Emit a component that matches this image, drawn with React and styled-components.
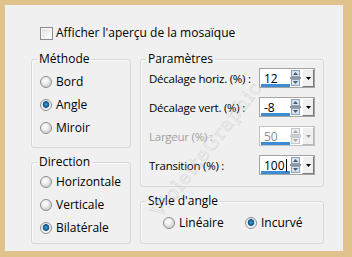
import React from 'react';
import styled, { createGlobalStyle } from 'styled-components';

const GlobalStyle = createGlobalStyle`
  body {
    margin: 0;
    font-family: 'Open Sans', 'Noto Sans', sans-serif;
    font-size: 12px;
    color: #000;
  }
`;

function Radio({ checked, label, disabled }) {
  return (
    <RadioRow $disabled={disabled}>
      <RadioDot $checked={checked} />
      <span>{label}</span>
    </RadioRow>
  );
}

function SpinArrows({ disabled }) {
  const tri = disabled ? '#a8a8a8' : '#4a5a70';
  const box = disabled ? '#eceef0' : '#d6e2ee';
  const edge = disabled ? '#c4c8cc' : '#8fa2b8';
  return (
    <svg width="11" height="18" viewBox="0 0 11 18">
      <rect x="1.5" y="1.5" width="8" height="6" fill={box} stroke={edge} />
      <path d="M3 6 L5.5 3 L8 6 Z" fill={tri} />
      <line x1="0" y1="9" x2="11" y2="9" stroke={disabled ? '#9a9a9a' : '#1e2a38'} strokeWidth="1" />
      <rect x="1.5" y="10.5" width="8" height="6" fill={box} stroke={edge} />
      <path d="M3 12 L8 12 L5.5 15 Z" fill={tri} />
    </svg>
  );
}

function Spin({ value, disabled, caret }) {
  return (
    <SpinBox $disabled={disabled}>
      <SpinField $disabled={disabled}>
        {value}
        {caret && <Caret />}
      </SpinField>
      <SpinArrowsWrap>
        <SpinArrows disabled={disabled} />
      </SpinArrowsWrap>
      <DropButton $disabled={disabled}>
        <svg width="5" height="3" viewBox="0 0 5 3">
          <path d="M0 0 L5 0 L2.5 3 Z" fill={disabled ? '#9a9a9a' : '#000'} />
        </svg>
      </DropButton>
    </SpinBox>
  );
}

function App() {
  return (
    <Frame>
      <GlobalStyle />
      <Panel>
        <CheckRow>
          <CheckBox />
          <span>Afficher l'aperçu de la mosaïque</span>
        </CheckRow>

        <Columns>
          <Column $width={100}>
            <Group $height={97} $top={3}>
              <Legend>Méthode</Legend>
              <Radio label="Bord" />
              <Radio label="Angle" checked />
              <Radio label="Miroir" />
            </Group>
            <Group $height={90} $top={0}>
              <Legend>Direction</Legend>
              <Radio label="Horizontale" />
              <Radio label="Verticale" />
              <Radio label="Bilatérale" checked />
            </Group>
          </Column>

          <Column $width={184}>
            <Group $height={136} $top={1}>
              <Legend>Paramètres</Legend>
              <ParamList>
                <ParamRow>
                  <ParamLabel>Décalage horiz. (%) :</ParamLabel>
                  <Spin value="12" />
                </ParamRow>
                <ParamRow>
                  <ParamLabel>Décalage vert. (%) :</ParamLabel>
                  <Spin value="-8" />
                </ParamRow>
                <ParamRow>
                  <ParamLabel $disabled>Largeur (%) :</ParamLabel>
                  <Spin value="50" disabled />
                </ParamRow>
                <ParamRow>
                  <ParamLabel>Transition (%) :</ParamLabel>
                  <Spin value="100" caret />
                </ParamRow>
              </ParamList>
            </Group>
            <Group $height={51} $top={2}>
              <Legend>Style d'angle</Legend>
              <StyleOptions>
                <Radio label="Linéaire" />
                <Radio label="Incurvé" checked />
              </StyleOptions>
            </Group>
          </Column>
        </Columns>

        <Watermark>VioletteGraphic</Watermark>
      </Panel>
    </Frame>
  );
}

const Frame = styled.div`
  width: 352px;
  height: 257px;
  box-sizing: border-box;
  padding: 5px 9px 6px 5px;
  background: #dfc28c;
`;

const Panel = styled.div`
  position: relative;
  height: 100%;
  box-sizing: border-box;
  padding: 21px 0 0 26px;
  background: #f0f0f0;
  overflow: hidden;
`;

const CheckRow = styled.label`
  display: flex;
  align-items: center;
  gap: 3px;
  height: 14px;
  margin-left: 9px;
  line-height: 14px;
`;

const CheckBox = styled.span`
  width: 11px;
  height: 11px;
  border: 1px solid #8c8c8c;
  background: linear-gradient(135deg, #dcdcdc 0%, #f4f4f4 60%, #ffffff 100%);
  box-shadow: inset 0 0 0 1px #f8f8f8;
`;

const Columns = styled.div`
  display: flex;
  gap: 9px;
  margin-top: 11px;
`;

const Column = styled.div`
  display: flex;
  flex-direction: column;
  gap: 6px;
  width: ${({ $width }) => $width}px;
`;

const Group = styled.fieldset`
  margin: 0;
  min-width: 0;
  height: ${({ $height }) => $height}px;
  box-sizing: border-box;
  padding: ${({ $top }) => $top}px 8px 0 8px;
  border: 1px solid #d8d8d8;
  border-radius: 3px;
  box-shadow: inset 1px 1px 0 #fbfbfb;
`;

const Legend = styled.legend`
  margin-left: -3px;
  padding: 0 2px;
  font-size: 12px;
  line-height: 16px;
`;

const RadioRow = styled.div`
  display: flex;
  align-items: center;
  gap: 4px;
  height: 23px;
  color: ${({ $disabled }) => ($disabled ? '#a0a0a0' : '#000')};
`;

const RadioDot = styled.span`
  flex: none;
  width: 12px;
  height: 12px;
  box-sizing: border-box;
  border-radius: 50%;
  border: 1px solid #8e8e8e;
  background: ${({ $checked }) =>
    $checked
      ? 'radial-gradient(circle at 50% 45%, #4fa3d6 0, #1a6aa0 2px, #0d4f7d 3px, #dfe6ec 3.6px, #f6f6f6 5px)'
      : 'radial-gradient(circle at 40% 35%, #ffffff 0, #f0f0f0 3px, #d4d4d4 6px)'};
`;

const ParamList = styled.div`
  display: flex;
  flex-direction: column;
  gap: 9px;
`;

const ParamRow = styled.div`
  display: flex;
  align-items: center;
  justify-content: space-between;
  height: 20px;
`;

const ParamLabel = styled.span`
  white-space: nowrap;
  font-size: 11.5px;
  letter-spacing: -0.25px;
  color: ${({ $disabled }) => ($disabled ? '#a0a0a0' : '#000')};
`;

const SpinBox = styled.div`
  flex: none;
  display: flex;
  width: 56px;
  height: 20px;
  box-sizing: border-box;
  border: 1px solid ${({ $disabled }) => ($disabled ? '#c2c2c2' : '#a4a4a4')};
  background: #fff;
`;

const SpinField = styled.div`
  display: flex;
  align-items: center;
  width: 30px;
  margin-left: 1px;
  padding-left: 3px;
  box-sizing: border-box;
  line-height: 15px;
  color: ${({ $disabled }) => ($disabled ? '#8c8c8c' : '#000')};
  box-shadow: inset 0 -3px 0 #3d8bd3;
`;

const Caret = styled.span`
  display: inline-block;
  width: 1px;
  height: 13px;
  margin-left: 1px;
  background: #000;
`;

const SpinArrowsWrap = styled.div`
  display: flex;
  align-items: center;
  width: 11px;
`;

const DropButton = styled.div`
  display: flex;
  align-items: center;
  justify-content: center;
  width: 12px;
  margin-left: 1px;
  box-sizing: border-box;
  background: #f0f0f0;
  border-top: 1px solid #ffffff;
  border-left: 1px solid #ffffff;
  border-right: 1px solid ${({ $disabled }) => ($disabled ? '#b8b8b8' : '#7a7a7a')};
  border-bottom: 1px solid ${({ $disabled }) => ($disabled ? '#b8b8b8' : '#7a7a7a')};
`;

const StyleOptions = styled.div`
  display: grid;
  grid-template-columns: 82px auto;
  margin-left: 14px;
`;

const Watermark = styled.div`
  position: absolute;
  left: 118px;
  top: 133px;
  transform: rotate(-52deg);
  font-family: 'DejaVu Serif', serif;
  font-size: 19px;
  letter-spacing: 1px;
  color: transparent;
  -webkit-text-stroke: 0.6px rgba(185, 185, 185, 0.45);
  pointer-events: none;
  white-space: nowrap;
`;

export default App;
